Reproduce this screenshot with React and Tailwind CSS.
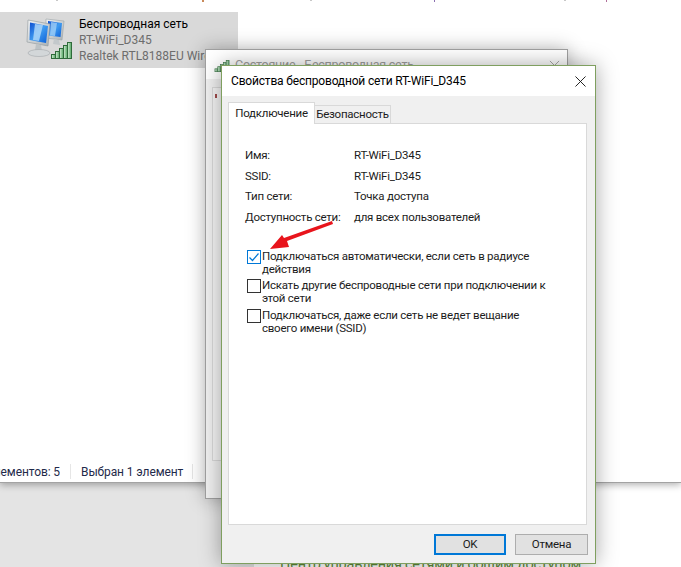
import React from "react";

const FONT = { fontFamily: "Roboto, sans-serif" };

// Значок уровня сигнала (зеленые столбики)
const SignalBars = ({ className }) => (
  <svg viewBox="0 0 21 17" className={className}>
    <defs>
      <linearGradient id="bar" x1="0" y1="0" x2="1" y2="0">
        <stop offset="0" stopColor="#d8efd8" />
        <stop offset="1" stopColor="#4fa45f" />
      </linearGradient>
    </defs>
    {[
      [0.5, 12.5, 4],
      [4.5, 9.5, 7],
      [8.5, 6.5, 10],
      [12.5, 3.5, 13],
      [16.5, 0.5, 16],
    ].map(([x, y, h]) => (
      <rect key={x} x={x} y={y} width="4" height={h} fill="url(#bar)" stroke="#2f6b3a" strokeWidth="1" />
    ))}
  </svg>
);

const NetworkIcon = () => (
  <svg viewBox="0 0 46 46" className="absolute left-[26px] top-[4px] w-[46px] h-[46px]">
    <defs>
      <linearGradient id="screen" x1="0" y1="0" x2="1" y2="1">
        <stop offset="0" stopColor="#0f4fd0" />
        <stop offset="0.5" stopColor="#3f9bf0" />
        <stop offset="1" stopColor="#0b5fd8" />
      </linearGradient>
      <linearGradient id="frame" x1="0" y1="0" x2="1" y2="1">
        <stop offset="0" stopColor="#f2f4f5" />
        <stop offset="1" stopColor="#a9b0b4" />
      </linearGradient>
    </defs>
    {/* задний монитор */}
    <path d="M20 3 L38 5 L36 24 L20 22 Z" fill="url(#frame)" stroke="#9aa2a6" strokeWidth="0.6" />
    <path d="M22 5 L36 7 L34.5 21 L22 19.5 Z" fill="url(#screen)" />
    <path d="M25 6 L31 7 L29 20 L24 19.5 Z" fill="#a7d3f7" opacity="0.75" />
    <path d="M28 23 L33 24 L34 29 L27 28 Z" fill="#c3c8cb" />
    {/* передний монитор */}
    <path d="M2 4 L24 8 L22 30 L1 26 Z" fill="url(#frame)" stroke="#8f979b" strokeWidth="0.6" />
    <path d="M4 6.5 L22 10 L20 27 L3.5 24 Z" fill="url(#screen)" />
    <path d="M9 8 L17 9 L13 25 L7 24 Z" fill="#b4dbfa" opacity="0.8" />
    <path d="M10 28 L15 29 L16 35 L9 34 Z" fill="#bcc2c5" />
    <ellipse cx="13" cy="37" rx="11" ry="3.5" fill="#d3d7d9" stroke="#a2a8ab" strokeWidth="0.6" />
  </svg>
);

const InfoRow = ({ label, value }) => (
  <div className="flex h-[20.7px] items-center">
    <span className="w-[109px] shrink-0 whitespace-nowrap">{label}</span>
    <span className="whitespace-nowrap">{value}</span>
  </div>
);

const Check = ({ checked, first, second }) => (
  <div className="flex h-[29.5px] items-start">
    <span
      className={
        "mt-[1px] flex h-[14px] w-[14px] shrink-0 items-center justify-center border bg-white " +
        (checked ? "border-[#0078d7]" : "border-[#333333]")
      }
    >
      {checked && (
        <svg viewBox="0 0 12 12" className="h-[12px] w-[12px]">
          <path d="M1.5 6.5 L4.5 9.5 L10.5 2.5" fill="none" stroke="#0078d7" strokeWidth="1.2" />
        </svg>
      )}
    </span>
    <span className="ml-[1px] mt-[1px] whitespace-nowrap leading-[13px]">
      {first}
      <br />
      {second}
    </span>
  </div>
);

export default function App() {
  return (
    <div
      className="relative h-[567px] w-[681px] overflow-hidden bg-white text-[11.5px] tracking-[-0.25px] text-[#1c1c1c]"
      style={FONT}
    >
      {/* Окно проводника */}
      <div className="relative z-10 flex h-[483px] flex-col border-b border-[#a3a3a3] bg-white shadow-[0_2px_7px_rgba(0,0,0,0.3)]">
        <div className="h-[2px] flex items-start">
          <span className="ml-[56px] h-[1px] w-[2px] bg-[#c8c8c8]" />
          <span className="ml-[144px] h-[2px] w-[2px] bg-[#c98a5a]" />
          <span className="ml-[106px] h-[1px] w-[2px] bg-[#c8c8c8]" />
          <span className="ml-[122px] h-[2px] w-[1px] bg-[#8a6fb0]" />
          <span className="ml-[129px] h-[1px] w-[2px] bg-[#c8c8c8]" />
          <span className="ml-[40px] h-[2px] w-[1px] bg-[#b06f9a]" />
        </div>
        <div className="relative mt-[10px] h-[56px] w-[238px] overflow-hidden bg-[#d9d9d9] pl-[79px] pt-[4px] text-[12px] tracking-normal">
          <NetworkIcon />
          <SignalBars className="absolute left-[51px] top-[30px] h-[17px] w-[21px]" />
          <div className="whitespace-nowrap leading-[16px] text-black">Беспроводная сеть</div>
          <div className="whitespace-nowrap leading-[16px] text-[#6d6d6d]">RT-WiFi_D345</div>
          <div className="whitespace-nowrap leading-[16px] text-[#6d6d6d]">Realtek RTL8188EU Wireless LAN</div>
        </div>
        <div className="flex-1" />
        <div className="mb-[2px] flex h-[17px] items-center text-[12px] tracking-[-0.1px] text-[#1f2a4a]">
          <div className="flex w-[60px] shrink-0 justify-end overflow-hidden whitespace-nowrap">Элементов: 5</div>
          <span className="ml-[10px] h-[15px] w-px bg-[#e6e6e6]" />
          <span className="ml-[10px] w-[101px] whitespace-nowrap">Выбран 1 элемент</span>
          <span className="ml-[10px] h-[15px] w-px bg-[#e6e6e6]" />
        </div>
      </div>

      {/* Низ страницы */}
      <div className="flex h-[84px]">
        <div className="w-[254px] bg-[#e4e4e4]" />
        <div className="flex-1 overflow-hidden bg-white pl-[26px] pt-[72px] text-[14.5px] leading-[20px] text-[#5f8a3a]">
          <span className="whitespace-nowrap">Центр управления сетями и общим доступом</span>
        </div>
      </div>

      {/* Окно "Состояние" позади */}
      <div className="absolute left-[205px] top-[49px] z-20 flex h-[450px] w-[363px] flex-col border border-[#a0a0a0] bg-[#f0f0f0] shadow-[0_0_18px_rgba(0,0,0,0.3)]">
        <div className="flex h-[29px] items-center bg-white pl-[8px] pr-[7px] pt-[2px] text-[#a0a0a0]">
          <SignalBars className="h-[12px] w-[16px] opacity-90" />
          <span className="ml-[5px] flex-1 whitespace-nowrap text-[12.5px]">Состояние - Беспроводная сеть</span>
          <svg viewBox="0 0 12 12" className="h-[11px] w-[11px]">
            <path d="M1 1 L11 11 M11 1 L1 11" stroke="#a0a0a0" strokeWidth="1" />
          </svg>
        </div>
        <div className="mx-[6px] mb-[37px] mt-[8px] flex-1 border border-[#d9d9d9] bg-[#f5f5f5] pl-[2px] pt-[6px]">
          <span className="block h-[4px] w-[2px] bg-[#a04a4a]" />
        </div>
      </div>

      {/* Окно свойств */}
      <div className="absolute left-[221px] top-[65px] z-30 flex h-[499px] w-[375px] flex-col border border-[#7f9f5f] bg-[#f0f0f0] shadow-[0_0_20px_rgba(0,0,0,0.35)]">
        <div className="flex h-[30px] items-center justify-between bg-white pl-[9px] pr-[9px]">
          <span className="whitespace-nowrap text-[12px] tracking-[-0.18px] text-black">
            Свойства беспроводной сети RT-WiFi_D345
          </span>
          <svg viewBox="0 0 12 12" className="h-[11px] w-[11px]">
            <path d="M0.5 0.5 L11.5 11.5 M11.5 0.5 L0.5 11.5" stroke="#111111" strokeWidth="1" />
          </svg>
        </div>

        <div className="flex h-[27px] items-end pl-[6px] pt-[6px]">
          <div className="relative z-10 -mb-px flex h-[22px] w-[87px] items-center justify-center border border-b-0 border-[#d9d9d9] bg-white">
            Подключение
          </div>
          <div className="flex h-[18px] w-[76px] items-center justify-center border border-l-0 border-b-0 border-[#d9d9d9] bg-[#f0f0f0] pt-[1px]">
            Безопасность
          </div>
        </div>

        <div className="ml-[6px] h-[402px] w-[359px] border border-[#d9d9d9] bg-white pl-[16px] pt-[21.4px]">
          <InfoRow label="Имя:" value="RT-WiFi_D345" />
          <InfoRow label="SSID:" value="RT-WiFi_D345" />
          <InfoRow label="Тип сети:" value="Точка доступа" />
          <InfoRow label="Доступность сети:" value="для всех пользователей" />
          <div className="mt-[20.6px] pl-[2px]">
            <Check checked first="Подключаться автоматически, если сеть в радиусе" second="действия" />
            <Check first="Искать другие беспроводные сети при подключении к" second="этой сети" />
            <Check first="Подключаться, даже если сеть не ведет вещание" second="своего имени (SSID)" />
          </div>
        </div>

        <div className="mt-[9px] flex justify-end gap-[9px] pr-[7px]">
          <button className="h-[21px] w-[72px] border-2 border-[#0078d7] bg-[#e1e1e1]">OK</button>
          <button className="h-[21px] w-[73px] border border-[#adadad] bg-[#e1e1e1]">Отмена</button>
        </div>
      </div>

      {/* Красная стрелка поверх окна */}
      <svg viewBox="0 0 681 567" className="pointer-events-none absolute left-0 top-0 z-40 h-[567px] w-[681px]">
        <path d="M332 221 L333 224 L287 241 L289 247 L270 249 L282 235 L284 238 Z" fill="#e8141c" />
      </svg>
    </div>
  );
}
